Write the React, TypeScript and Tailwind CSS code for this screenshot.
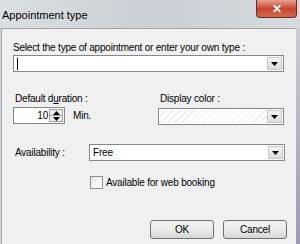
import React from "react";

function DropArrow() {
  return (
    <div className="flex h-full w-[15px] items-center justify-center border border-[#c8c8c8] bg-gradient-to-b from-[#f4f4f4] to-[#dcdcdc]">
      <svg width="7" height="4" viewBox="0 0 7 4">
        <path d="M0 0h7L3.5 4z" fill="#000" />
      </svg>
    </div>
  );
}

function Combo({ w, children, hatch }: { w: string; children?: React.ReactNode; hatch?: boolean }) {
  return (
    <div className={`${w} flex h-[17px] items-stretch border border-[#828790] bg-white p-[1px]`}>
      <div
        className={`flex flex-1 items-center pl-[2px] ${
          hatch
            ? "bg-[repeating-linear-gradient(135deg,#ffffff_0px,#ffffff_4px,#ececec_4px,#ececec_5px)]"
            : ""
        }`}
      >
        {children}
      </div>
      <DropArrow />
    </div>
  );
}

function Button({ label }: { label: string }) {
  return (
    <button className="flex h-[19px] w-[64px] items-center justify-center rounded-[3px] border border-[#707070] bg-gradient-to-b from-[#f2f2f2] via-[#ebebeb] to-[#d6d6d6] text-[10px] text-black">
      {label}
    </button>
  );
}

export default function App() {
  return (
    <div
      className="flex h-[244px] w-[300px] flex-col overflow-hidden bg-[#cfd6dc] text-[10px] tracking-[-0.2px] text-black"
      style={{ fontFamily: '"Liberation Sans", Arial, sans-serif' }}
    >
      {/* title bar */}
      <div className="relative flex h-[28px] shrink-0 items-start bg-gradient-to-r from-[#dadfe3] via-[#c9cfd4] to-[#d5dadf]">
        <span className="ml-[2px] mt-[7px] text-[11px] tracking-normal text-black">Appointment type</span>
        <div className="absolute right-[3px] top-0 flex h-[18px] w-[41px] items-center justify-center rounded-b-[4px] border border-t-0 border-[#6d2a22] bg-gradient-to-b from-[#e6a08f] via-[#c8452f] to-[#cf6a4f]">
          <span className="text-[12px] font-bold leading-none text-white">✕</span>
        </div>
      </div>

      <div className="flex flex-1">
        {/* client area */}
        <div className="ml-[1px] w-[295px] border-l border-t border-[#a0a4a8] bg-[#f0f0f0] pl-[11px]">
          <div className="mt-[12px] leading-[13px]">Select the type of appointment or enter your own type :</div>
          <div className="mt-[1px]">
            <Combo w="w-[271px]">
              <span className="h-[12px] w-px bg-black" />
            </Combo>
          </div>

          <div className="mt-[20px] flex">
            <div className="w-[145px]">
              <div className="pl-[2px] leading-[13px]">
                Default d<span className="underline">u</span>ration :
              </div>
              <div className="mt-[2px] flex items-center">
                <div className="flex h-[17px] w-[52px] items-stretch border border-[#828790] bg-white p-[1px]">
                  <div className="flex flex-1 items-center justify-end pr-[1px]">10</div>
                  <div className="flex w-[14px] flex-col">
                    <div className="flex flex-1 items-center justify-center border border-[#a0a0a0] bg-[#ececec]">
                      <svg width="7" height="4" viewBox="0 0 7 4">
                        <path d="M0 4h7L3.5 0z" fill="#000" />
                      </svg>
                    </div>
                    <div className="flex flex-1 items-center justify-center border border-t-0 border-[#a0a0a0] bg-[#ececec]">
                      <svg width="7" height="4" viewBox="0 0 7 4">
                        <path d="M0 0h7L3.5 4z" fill="#000" />
                      </svg>
                    </div>
                  </div>
                </div>
                <span className="ml-[8px]">Min.</span>
              </div>
            </div>
            <div>
              <div className="pl-[2px] leading-[13px]">Display color :</div>
              <div className="mt-[3px]">
                <Combo w="w-[126px]" hatch />
              </div>
            </div>
          </div>

          <div className="mt-[19px] flex items-center">
            <span className="w-[76px] pl-[2px]">Availability :</span>
            <Combo w="w-[196px]">Free</Combo>
          </div>

          <div className="ml-[77px] mt-[14px] flex items-center">
            <div className="h-[13px] w-[13px] border border-[#8e8f8f] bg-gradient-to-br from-[#e8e8e8] to-[#ffffff]" />
            <span className="ml-[3px]">Available for web booking</span>
          </div>

          <div className="mt-[30px] flex">
            <div className="ml-[137px]">
              <Button label="OK" />
            </div>
            <div className="ml-[9px]">
              <Button label="Cancel" />
            </div>
          </div>
        </div>
        {/* right frame */}
        <div className="flex-1 bg-gradient-to-b from-[#c8cdd4] to-[#9f98b4]" />
      </div>
    </div>
  );
}
